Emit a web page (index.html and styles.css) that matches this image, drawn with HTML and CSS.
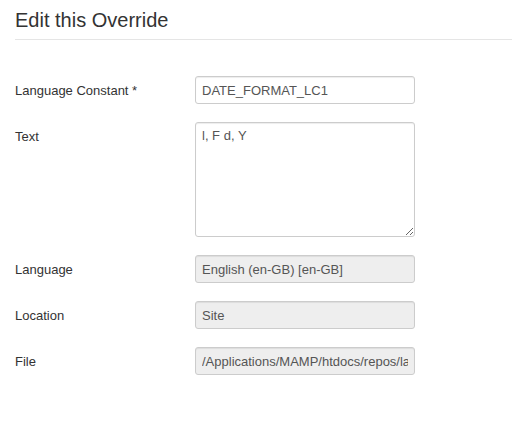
FILE: index.html
```html
<!DOCTYPE html>
<html lang="en">
<head>
    <meta charset="UTF-8">
    <meta name="viewport" content="width=device-width, initial-scale=1.0">
    <title>Edit this Override</title>
    <link rel="stylesheet" href="styles.css">
</head>
<body>
    <form class="form-horizontal">
        <fieldset>
            <legend>Edit this Override</legend>

            <div class="control-group">
                <label class="control-label" for="key">Language Constant *</label>
                <div class="controls">
                    <input type="text" id="key" value="DATE_FORMAT_LC1">
                </div>
            </div>

            <div class="control-group">
                <label class="control-label" for="override">Text</label>
                <div class="controls">
                    <textarea id="override">l, F d, Y</textarea>
                </div>
            </div>

            <div class="control-group">
                <label class="control-label" for="language">Language</label>
                <div class="controls">
                    <input type="text" id="language" value="English (en-GB) [en-GB]" readonly>
                </div>
            </div>

            <div class="control-group">
                <label class="control-label" for="client">Location</label>
                <div class="controls">
                    <input type="text" id="client" value="Site" readonly>
                </div>
            </div>

            <div class="control-group">
                <label class="control-label" for="file">File</label>
                <div class="controls">
                    <input type="text" id="file" value="/Applications/MAMP/htdocs/repos/language/overrides/en-GB.override.ini" readonly>
                </div>
            </div>
        </fieldset>
    </form>
</body>
</html>
```

FILE: styles.css
```css
body {
    margin: 0;
    padding: 0 0 0 15px;
    background-color: #fff;
    font-family: "Helvetica Neue", "Liberation Sans", Arial, sans-serif;
    font-size: 13px;
    line-height: 18px;
    color: #333;
}

fieldset {
    margin: 0;
    padding: 0;
    border: 0;
}

legend {
    display: block;
    width: 100%;
    padding: 1px 0 0;
    margin-bottom: 36px;
    font-size: 20px;
    line-height: 38px;
    color: #333;
    border: 0;
    border-bottom: 1px solid #e5e5e5;
}

.control-group {
    display: flex;
    margin-bottom: 18px;
}

.control-label {
    width: 180px;
    flex-shrink: 0;
    padding-top: 6px;
}

input,
textarea {
    box-sizing: border-box;
    width: 220px;
    margin: 0;
    padding: 4px 6px;
    font-family: inherit;
    font-size: 13px;
    line-height: 18px;
    color: #555;
    background-color: #fff;
    border: 1px solid #ccc;
    border-radius: 3px;
    box-shadow: inset 0 1px 1px rgba(0, 0, 0, 0.075);
}

input {
    height: 28px;
}

textarea {
    display: block;
    height: 115px;
    resize: both;
}

input[readonly] {
    background-color: #eee;
}
```
